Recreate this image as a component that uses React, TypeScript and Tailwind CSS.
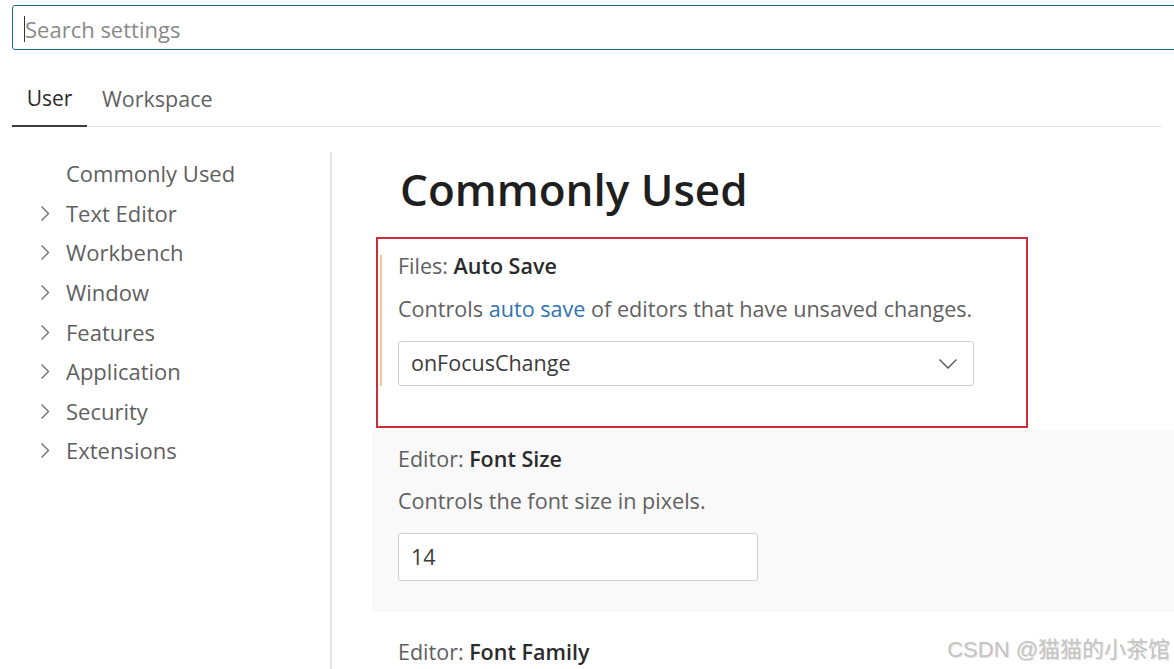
import React from 'react';

const navItems = ['Text Editor', 'Workbench', 'Window', 'Features', 'Application', 'Security', 'Extensions'];

const Chevron = () => (
  <svg width="10" height="17" viewBox="0 0 10 17" fill="none" className="shrink-0">
    <path d="M1.5 1.5 L8.5 8.5 L1.5 15.5" stroke="#6b6b6b" strokeWidth="1.3" />
  </svg>
);

const SettingTitle = ({ group, name }: { group: string; name: string }) => (
  <div className="h-[24px] leading-[24px] text-[21.5px] text-[#5f5f5f]">
    {group}: <span className="font-semibold text-[#2b2b2b]">{name}</span>
  </div>
);

export default function App() {
  return (
    <div className="relative w-[1174px] h-[669px] overflow-hidden bg-white text-[#616161]" style={{ fontFamily: '"Segoe UI", "Open Sans", sans-serif' }}>
      {/* search */}
      <div className="pt-[5px] pl-[12px]">
        <div className="w-[1180px] h-[45px] border border-[#1e6c80] rounded-[3px] flex items-center pl-[11px] pt-[3px]">
          <div className="w-px h-[26px] bg-[#333]" />
          <span className="text-[22px] text-[#8a8a8a]">Search settings</span>
        </div>
      </div>

      {/* tabs */}
      <div className="mt-[20px] mx-[12px] flex border-b border-[#e4e4e4] h-[57px] pt-[2px]">
        <div className="w-[75px] flex items-center justify-center border-b-2 border-[#3c3c3c] -mb-px text-[21px] text-[#2b2b2b]">User</div>
        <div className="px-[15px] flex items-center text-[21.5px] text-[#616161]">Workspace</div>
      </div>

      <div className="flex mt-[25px]">
        {/* sidebar */}
        <div className="w-[332px] h-[520px] border-r-2 border-[#e6e6e6] shrink-0 pt-[2px]">
          <div className="h-[39.6px] flex items-center pl-[66px] text-[22px] text-[#5f5f5f]">Commonly Used</div>
          {navItems.map((item) => (
            <div key={item} className="h-[39.6px] flex items-center pl-[40px] gap-[16px] text-[22px] text-[#5f5f5f]">
              <Chevron />
              <span>{item}</span>
            </div>
          ))}
        </div>

        {/* main */}
        <div className="flex-1 -mt-[25px] pl-[40px]">
          <h1 className="h-[110px] pl-[28px] pt-[35px] text-[44px] leading-[54px] font-semibold text-[#1f1f1f]">Commonly Used</h1>

          <div className="relative h-[182px] pl-[26px] pt-[17px]">
            <div className="absolute left-[8px] top-[18px] w-[2px] h-[131px] bg-[#e2c99a]" />
            <div className="absolute left-[4px] top-0 w-[652px] h-[191px] border-2 border-[#cd2e3a]" />
            <SettingTitle group="Files" name="Auto Save" />
            <div className="mt-[19px] h-[24px] leading-[24px] text-[21.6px]">
              Controls <span className="text-[#2f73b0]">auto save</span> of editors that have unsaved changes.
            </div>
            <div className="mt-[20px] w-[576px] h-[45px] border border-[#cfcfcf] rounded-[3px] flex items-center justify-between pl-[12px] pr-[15px] text-[21.5px] text-[#3b3b3b]">
              <span>onFocusChange</span>
              <svg width="20" height="12" viewBox="0 0 20 12" fill="none">
                <path d="M1.5 1.5 L10 10 L18.5 1.5" stroke="#555" strokeWidth="1.4" />
              </svg>
            </div>
          </div>

          <div className="mt-[11px] h-[182px] pl-[26px] pt-[17px] bg-[#f9f9f9]">
            <SettingTitle group="Editor" name="Font Size" />
            <div className="mt-[18px] h-[24px] leading-[24px] text-[21.6px]">Controls the font size in pixels.</div>
            <div className="mt-[20px] w-[360px] h-[48px] bg-white border border-[#cfcfcf] rounded-[3px] flex items-center pl-[12px] text-[21.5px] text-[#3b3b3b]">14</div>
          </div>

          <div className="mt-[11px] h-[182px] pl-[26px] pt-[17px]">
            <SettingTitle group="Editor" name="Font Family" />
          </div>
        </div>
      </div>

      <div
        className="absolute right-[4px] top-[633px] text-[22px] text-[#c4c4c4]"
        style={{ fontFamily: '"Liberation Sans", "Noto Sans CJK SC", sans-serif', textShadow: '1px 1px 1px rgba(0,0,0,0.12)' }}
      >
        CSDN @猫猫的小茶馆
      </div>
    </div>
  );
}
